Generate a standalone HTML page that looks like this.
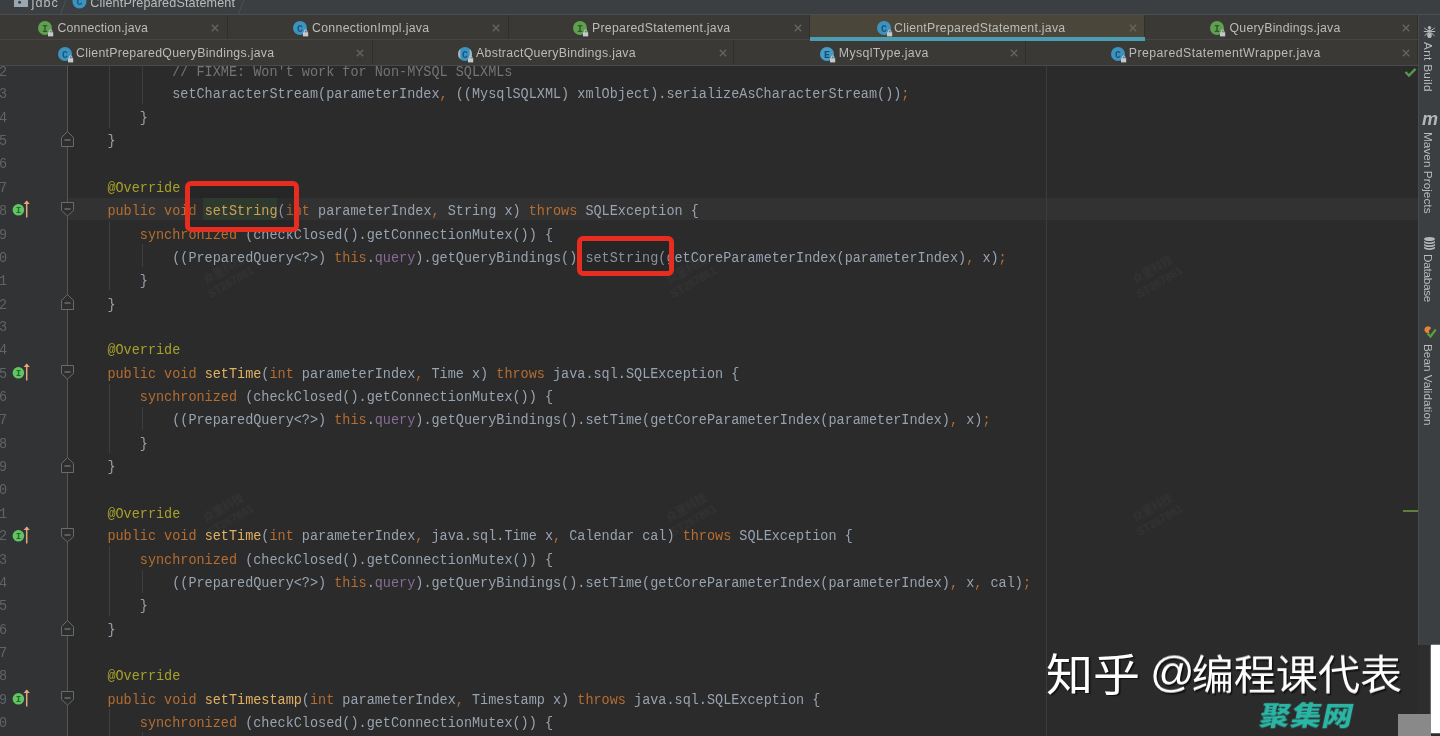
<!DOCTYPE html>
<html lang="zh">
<head>
<meta charset="utf-8">
<title>ClientPreparedStatement.java</title>
<style>
html,body{margin:0;padding:0;}
body{width:1440px;height:736px;overflow:hidden;background:#2b2b2b;position:relative;font-family:"Liberation Sans","Noto Sans CJK SC",sans-serif;}
.abs{position:absolute;}
/* top breadcrumb */
#crumb{left:0;top:0;width:1440px;height:14px;background:#3c3f41;overflow:hidden;z-index:5;}
#crumb span{position:absolute;top:-6px;font-size:12.6px;color:#bbbbbb;white-space:nowrap;line-height:18px;}
#crumbline{left:0;top:14px;width:1440px;height:1px;background:#4b4d4f;z-index:5;}
/* tabs */
.tabrow{left:0;width:1418px;height:24px;background:#3a3935;z-index:4;}
.tab{position:absolute;top:0;height:24px;box-sizing:border-box;border-right:1px solid #2f2f2d;}
.tab .t{position:absolute;top:1px;line-height:24px;font-size:12.3px;color:#bbbbbb;white-space:nowrap;}
.tab .x{position:absolute;top:9px;width:8px;height:8px;}
.tab svg.ic{position:absolute;top:5px;}
.tab.act{background:#4a4639;}
.rowline{left:0;width:1418px;height:1px;background:#2b2b2b;z-index:5;}
/* editor */
#gutter{left:0;top:65px;width:67px;height:671px;background:#313335;}
#gutline{left:67px;top:65px;width:1px;height:671px;background:#555555;}
#caret{left:68px;top:197.5px;width:1350px;height:22px;background:#323232;}
#margin{left:1046px;top:65px;width:1px;height:671px;background:#3d3d3d;}
#code{left:74.6px;top:61px;font-family:"Liberation Mono",monospace;font-size:13.5px;line-height:22.365px;color:#a9b7c6;transform-origin:0 0;transform:scaleY(1.04);opacity:.86;}
#code div{height:22.365px;white-space:pre;}
.k{color:#cc7832;} .m{color:#ffc66d;} .a{color:#bbb529;} .c{color:#808080;} .f{color:#9876aa;}
.hl{background:#344134;}
#nums{left:-1.4px;top:61px;font-family:"Liberation Mono",monospace;font-size:13.5px;line-height:22.365px;color:#606366;transform-origin:0 0;transform:scaleY(1.04);}
#nums div{height:22.365px;white-space:pre;}
.redbox{border:5.5px solid #e62d20;border-radius:6px;box-sizing:border-box;z-index:3;background:rgba(0,0,0,.1);}
/* right strip */
#strip{left:1418px;top:15px;width:22px;height:630px;background:#3c3f41;z-index:6;}
#stripline{left:1418px;top:15px;width:1px;height:630px;background:#484a4c;z-index:7;}
.vt{position:absolute;left:1421.3px;width:14px;writing-mode:vertical-rl;font-size:11.8px;color:#bbbbbb;white-space:nowrap;line-height:14px;z-index:8;}
.mv{font-family:"Liberation Sans",sans-serif;font-style:italic;font-weight:bold;font-size:18px;line-height:18px;color:#b3b7ba;letter-spacing:-0.5px;}
.wm1{left:1046px;top:644px;font-family:"Liberation Sans","Noto Sans CJK SC",sans-serif;font-size:42px;line-height:60px;color:#fff;white-space:nowrap;text-shadow:1.5px 1.5px 1px rgba(0,0,0,.6);z-index:9;transform-origin:0 50%;}
.wm2{left:1260px;top:697px;font-family:"Liberation Sans","Noto Sans CJK SC",sans-serif;font-weight:900;font-size:27px;line-height:38px;color:#2bb5a5;white-space:nowrap;transform:skewX(-12deg) scaleX(1.13);transform-origin:0 50%;letter-spacing:0.8px;z-index:9;}
.fw{position:absolute;width:80px;margin-left:-40px;text-align:center;font-family:"Liberation Sans","Noto Sans CJK SC",sans-serif;font-size:11px;line-height:14px;font-weight:bold;color:rgba(255,255,255,.035);transform:rotate(-30deg);white-space:nowrap;z-index:2;}
#code,#nums,.tabrow,#crumb,.vt,.mv,.wm1,.wm2,.fw{will-change:transform;}
</style>
</head>
<body>
<div id="gutter" class="abs"></div>
<div id="gutline" class="abs"></div>
<div id="caret" class="abs"></div>
<div id="margin" class="abs"></div>
<!--ED-->
<div class="abs" style="left:109px;top:65.0px;width:1px;height:62.7px;background:#3e3e3e"></div>
<div class="abs" style="left:142px;top:65.0px;width:1px;height:39.4px;background:#3e3e3e"></div>
<div class="abs" style="left:109px;top:220.7px;width:1px;height:69.8px;background:#3e3e3e"></div>
<div class="abs" style="left:142px;top:244.0px;width:1px;height:23.3px;background:#3e3e3e"></div>
<div class="abs" style="left:109px;top:383.5px;width:1px;height:69.8px;background:#3e3e3e"></div>
<div class="abs" style="left:142px;top:406.8px;width:1px;height:23.3px;background:#3e3e3e"></div>
<div class="abs" style="left:109px;top:546.4px;width:1px;height:69.8px;background:#3e3e3e"></div>
<div class="abs" style="left:142px;top:569.6px;width:1px;height:23.3px;background:#3e3e3e"></div>
<div class="abs" style="left:109px;top:709.2px;width:1px;height:26.8px;background:#3e3e3e"></div>
<div class="abs" style="left:142px;top:732.4px;width:1px;height:3.6px;background:#3e3e3e"></div>
<div class="abs" style="left:203.3px;top:197.5px;width:74px;height:22.5px;background:#344134"></div>
<svg class="abs" style="left:60px;top:201.3px" width="15" height="16" viewBox="0 0 15 16"><path d="M1.500 1.500h12v8l-6 5.500l-6-5.500z" fill="#2d2e2f" stroke="#6a6a6a" stroke-width="1"/><path d="M4.500 8h6" stroke="#8a8a8a" stroke-width="1"/></svg>
<svg class="abs" style="left:60px;top:364.1px" width="15" height="16" viewBox="0 0 15 16"><path d="M1.500 1.500h12v8l-6 5.500l-6-5.500z" fill="#2d2e2f" stroke="#6a6a6a" stroke-width="1"/><path d="M4.500 8h6" stroke="#8a8a8a" stroke-width="1"/></svg>
<svg class="abs" style="left:60px;top:526.9px" width="15" height="16" viewBox="0 0 15 16"><path d="M1.500 1.500h12v8l-6 5.500l-6-5.500z" fill="#2d2e2f" stroke="#6a6a6a" stroke-width="1"/><path d="M4.500 8h6" stroke="#8a8a8a" stroke-width="1"/></svg>
<svg class="abs" style="left:60px;top:689.8px" width="15" height="16" viewBox="0 0 15 16"><path d="M1.500 1.500h12v8l-6 5.500l-6-5.500z" fill="#2d2e2f" stroke="#6a6a6a" stroke-width="1"/><path d="M4.500 8h6" stroke="#8a8a8a" stroke-width="1"/></svg>
<svg class="abs" style="left:60px;top:131.3px" width="15" height="16" viewBox="0 0 15 16"><path d="M1.500 15.500h12v-9l-6-6l-6 6z" fill="#2d2e2f" stroke="#6a6a6a" stroke-width="1"/><path d="M4.500 9h6" stroke="#8a8a8a" stroke-width="1"/></svg>
<svg class="abs" style="left:60px;top:294.1px" width="15" height="16" viewBox="0 0 15 16"><path d="M1.500 15.500h12v-9l-6-6l-6 6z" fill="#2d2e2f" stroke="#6a6a6a" stroke-width="1"/><path d="M4.500 9h6" stroke="#8a8a8a" stroke-width="1"/></svg>
<svg class="abs" style="left:60px;top:456.9px" width="15" height="16" viewBox="0 0 15 16"><path d="M1.500 15.500h12v-9l-6-6l-6 6z" fill="#2d2e2f" stroke="#6a6a6a" stroke-width="1"/><path d="M4.500 9h6" stroke="#8a8a8a" stroke-width="1"/></svg>
<svg class="abs" style="left:60px;top:619.8px" width="15" height="16" viewBox="0 0 15 16"><path d="M1.500 15.500h12v-9l-6-6l-6 6z" fill="#2d2e2f" stroke="#6a6a6a" stroke-width="1"/><path d="M4.500 9h6" stroke="#8a8a8a" stroke-width="1"/></svg>
<svg class="abs" style="left:11px;top:199.1px" width="22" height="20" viewBox="0 0 22 20"><circle cx="7.400" cy="10.800" r="5.800" fill="#62c462"/><text x="7.400" y="14" text-anchor="middle" font-family="Liberation Mono,monospace" font-weight="bold" font-size="9" fill="#1f6a2a">I</text><path d="M15.700 2v16.500" stroke="#e9a57e" stroke-width="1.500" fill="none"/><path d="M12.600 5l3.100-3.600l3.100 3.600z" fill="#e9a57e"/></svg>
<svg class="abs" style="left:11px;top:361.9px" width="22" height="20" viewBox="0 0 22 20"><circle cx="7.400" cy="10.800" r="5.800" fill="#62c462"/><text x="7.400" y="14" text-anchor="middle" font-family="Liberation Mono,monospace" font-weight="bold" font-size="9" fill="#1f6a2a">I</text><path d="M15.700 2v16.500" stroke="#e9a57e" stroke-width="1.500" fill="none"/><path d="M12.600 5l3.100-3.600l3.100 3.600z" fill="#e9a57e"/></svg>
<svg class="abs" style="left:11px;top:524.7px" width="22" height="20" viewBox="0 0 22 20"><circle cx="7.400" cy="10.800" r="5.800" fill="#62c462"/><text x="7.400" y="14" text-anchor="middle" font-family="Liberation Mono,monospace" font-weight="bold" font-size="9" fill="#1f6a2a">I</text><path d="M15.700 2v16.500" stroke="#e9a57e" stroke-width="1.500" fill="none"/><path d="M12.600 5l3.100-3.600l3.100 3.600z" fill="#e9a57e"/></svg>
<svg class="abs" style="left:11px;top:687.6px" width="22" height="20" viewBox="0 0 22 20"><circle cx="7.400" cy="10.800" r="5.800" fill="#62c462"/><text x="7.400" y="14" text-anchor="middle" font-family="Liberation Mono,monospace" font-weight="bold" font-size="9" fill="#1f6a2a">I</text><path d="M15.700 2v16.500" stroke="#e9a57e" stroke-width="1.500" fill="none"/><path d="M12.600 5l3.100-3.600l3.100 3.600z" fill="#e9a57e"/></svg>
<div class="abs redbox" style="left:185px;top:180.5px;width:114px;height:51px"></div>
<div class="abs redbox" style="left:577.2px;top:236.1px;width:97.2px;height:40px"></div>
<!--/ED-->
<!--CODE-->
<div id="code" class="abs">
<div>            <span class="c">// FIXME: Won't work for Non-MYSQL SQLXMLs</span></div>
<div>            setCharacterStream(parameterIndex<span class="k">,</span> ((MysqlSQLXML) xmlObject).serializeAsCharacterStream())<span class="k">;</span></div>
<div>        }</div>
<div>    }</div>
<div></div>
<div>    <span class="a">@Override</span></div>
<div>    <span class="k">public void </span><span class="m">setString</span>(<span class="k">int </span>parameterIndex<span class="k">, </span>String x) <span class="k">throws </span>SQLException {</div>
<div>        <span class="k">synchronized </span>(checkClosed().getConnectionMutex()) {</div>
<div>            ((PreparedQuery&lt;?&gt;) <span class="k">this</span>.<span class="f">query</span>).getQueryBindings().setString(getCoreParameterIndex(parameterIndex)<span class="k">, </span>x)<span class="k">;</span></div>
<div>        }</div>
<div>    }</div>
<div></div>
<div>    <span class="a">@Override</span></div>
<div>    <span class="k">public void </span><span class="m">setTime</span>(<span class="k">int </span>parameterIndex<span class="k">, </span>Time x) <span class="k">throws </span>java.sql.SQLException {</div>
<div>        <span class="k">synchronized </span>(checkClosed().getConnectionMutex()) {</div>
<div>            ((PreparedQuery&lt;?&gt;) <span class="k">this</span>.<span class="f">query</span>).getQueryBindings().setTime(getCoreParameterIndex(parameterIndex)<span class="k">, </span>x)<span class="k">;</span></div>
<div>        }</div>
<div>    }</div>
<div></div>
<div>    <span class="a">@Override</span></div>
<div>    <span class="k">public void </span><span class="m">setTime</span>(<span class="k">int </span>parameterIndex<span class="k">, </span>java.sql.Time x<span class="k">, </span>Calendar cal) <span class="k">throws </span>SQLException {</div>
<div>        <span class="k">synchronized </span>(checkClosed().getConnectionMutex()) {</div>
<div>            ((PreparedQuery&lt;?&gt;) <span class="k">this</span>.<span class="f">query</span>).getQueryBindings().setTime(getCoreParameterIndex(parameterIndex)<span class="k">, </span>x<span class="k">, </span>cal)<span class="k">;</span></div>
<div>        }</div>
<div>    }</div>
<div></div>
<div>    <span class="a">@Override</span></div>
<div>    <span class="k">public void </span><span class="m">setTimestamp</span>(<span class="k">int </span>parameterIndex<span class="k">, </span>Timestamp x) <span class="k">throws </span>java.sql.SQLException {</div>
<div>        <span class="k">synchronized </span>(checkClosed().getConnectionMutex()) {</div>
</div>
<div id="nums" class="abs"><div>2</div><div>3</div><div>4</div><div>5</div><div>6</div><div>7</div><div>8</div><div>9</div><div>0</div><div>1</div><div>2</div><div>3</div><div>4</div><div>5</div><div>6</div><div>7</div><div>8</div><div>9</div><div>0</div><div>1</div><div>2</div><div>3</div><div>4</div><div>5</div><div>6</div><div>7</div><div>8</div><div>9</div><div>0</div></div>
<!--/CODE-->
<!--TOP-->
<div id="crumb" class="abs"><svg class="abs" style="left:14px;top:-5px" width="14" height="12" viewBox="0 0 14 12"><path d="M0 0h5.5l1.5 2h7v10h-14z" fill="#9aa7b0"/><circle cx="5.6" cy="7.3" r="1.5" fill="#3c3f41"/></svg><span style="left:31.5px;letter-spacing:1.1px">jdbc</span><svg class="abs" style="left:59px;top:-11px" width="8" height="26" viewBox="0 0 8 26"><path d="M1 0L7 11L1 26" stroke="#4d5052" stroke-width="1" fill="none"/></svg><svg class="abs" style="left:72px;top:-6px" width="16" height="16" viewBox="0 0 16 16"><circle cx="7.5" cy="7.5" r="7" fill="#3d93bf"/><text x="7.5" y="11" text-anchor="middle" font-family="Liberation Mono,monospace" font-weight="bold" font-size="10" fill="#1c5578">C</text></svg><span style="left:90.3px;letter-spacing:0.15px">ClientPreparedStatement</span><svg class="abs" style="left:237px;top:-11px" width="8" height="26" viewBox="0 0 8 26"><path d="M1 0L7 11L1 26" stroke="#4d5052" stroke-width="1" fill="none"/></svg></div>
<div id="crumbline" class="abs"></div>
<div class="tabrow abs" style="top:15px">
<div class="tab" style="left:0px;width:228px"><svg class="ic" style="left:37.0px;top:5.0px" width="18" height="18" viewBox="0 0 18 18"><circle cx="8" cy="8" r="7" fill="#5e9f50"/><text x="8" y="11.6" text-anchor="middle" font-family="Liberation Mono,monospace" font-weight="bold" font-size="10" fill="#2c5a28">I</text><path d="M12.3 12.4v-1.3a1.3 1.3 0 0 1 2.6 0v1.3" fill="none" stroke="#c3c9cd" stroke-width="1"/><rect x="11" y="12.2" width="5.2" height="4.2" fill="#c3c9cd"/></svg><span class="t" style="left:57.5px;letter-spacing:0.152px">Connection.java</span><svg class="x" style="left:210.5px" width="8" height="8" viewBox="0 0 8 8"><path d="M0.8 0.8L7.2 7.2M7.2 0.8L0.8 7.2" stroke="#666663" stroke-width="1.25" fill="none"/></svg></div>
<div class="tab" style="left:228px;width:281px"><svg class="ic" style="left:64.0px;top:5.0px" width="18" height="18" viewBox="0 0 18 18"><circle cx="8" cy="8" r="7" fill="#3d93bf"/><text x="8" y="11.6" text-anchor="middle" font-family="Liberation Mono,monospace" font-weight="bold" font-size="10" fill="#1c5578">C</text><path d="M12.3 12.4v-1.3a1.3 1.3 0 0 1 2.6 0v1.3" fill="none" stroke="#c3c9cd" stroke-width="1"/><rect x="11" y="12.2" width="5.2" height="4.2" fill="#c3c9cd"/></svg><span class="t" style="left:84.0px;letter-spacing:0.318px">ConnectionImpl.java</span><svg class="x" style="left:264.0px" width="8" height="8" viewBox="0 0 8 8"><path d="M0.8 0.8L7.2 7.2M7.2 0.8L0.8 7.2" stroke="#666663" stroke-width="1.25" fill="none"/></svg></div>
<div class="tab" style="left:509px;width:301px"><svg class="ic" style="left:63.0px;top:5.0px" width="18" height="18" viewBox="0 0 18 18"><circle cx="8" cy="8" r="7" fill="#5e9f50"/><text x="8" y="11.6" text-anchor="middle" font-family="Liberation Mono,monospace" font-weight="bold" font-size="10" fill="#2c5a28">I</text><path d="M12.3 12.4v-1.3a1.3 1.3 0 0 1 2.6 0v1.3" fill="none" stroke="#c3c9cd" stroke-width="1"/><rect x="11" y="12.2" width="5.2" height="4.2" fill="#c3c9cd"/></svg><span class="t" style="left:83.0px;letter-spacing:0.266px">PreparedStatement.java</span><svg class="x" style="left:285.0px" width="8" height="8" viewBox="0 0 8 8"><path d="M0.8 0.8L7.2 7.2M7.2 0.8L0.8 7.2" stroke="#666663" stroke-width="1.25" fill="none"/></svg></div>
<div class="tab act" style="left:810px;width:335px"><svg class="ic" style="left:66.0px;top:5.0px" width="18" height="18" viewBox="0 0 18 18"><circle cx="8" cy="8" r="7" fill="#3d93bf"/><text x="8" y="11.6" text-anchor="middle" font-family="Liberation Mono,monospace" font-weight="bold" font-size="10" fill="#1c5578">C</text><path d="M12.3 12.4v-1.3a1.3 1.3 0 0 1 2.6 0v1.3" fill="none" stroke="#c3c9cd" stroke-width="1"/><rect x="11" y="12.2" width="5.2" height="4.2" fill="#c3c9cd"/></svg><span class="t" style="left:84.0px;letter-spacing:0.264px">ClientPreparedStatement.java</span><svg class="x" style="left:319.0px" width="8" height="8" viewBox="0 0 8 8"><path d="M0.8 0.8L7.2 7.2M7.2 0.8L0.8 7.2" stroke="#666663" stroke-width="1.25" fill="none"/></svg></div>
<div class="tab" style="left:1145px;width:273px"><svg class="ic" style="left:64.0px;top:5.0px" width="18" height="18" viewBox="0 0 18 18"><circle cx="8" cy="8" r="7" fill="#5e9f50"/><text x="8" y="11.6" text-anchor="middle" font-family="Liberation Mono,monospace" font-weight="bold" font-size="10" fill="#2c5a28">I</text><path d="M12.3 12.4v-1.3a1.3 1.3 0 0 1 2.6 0v1.3" fill="none" stroke="#c3c9cd" stroke-width="1"/><rect x="11" y="12.2" width="5.2" height="4.2" fill="#c3c9cd"/></svg><span class="t" style="left:84.5px;letter-spacing:0.241px">QueryBindings.java</span><svg class="x" style="left:257.0px" width="8" height="8" viewBox="0 0 8 8"><path d="M0.8 0.8L7.2 7.2M7.2 0.8L0.8 7.2" stroke="#666663" stroke-width="1.25" fill="none"/></svg></div>
</div>
<div class="rowline abs" style="top:39px;background:#474541"></div>
<div class="abs" style="left:810px;top:36.5px;width:335px;height:4px;background:#4a9db3;z-index:6"></div>
<div class="tabrow abs" style="top:40px;height:24.6px">
<div class="tab" style="left:0px;width:373px"><svg class="ic" style="left:56.6px;top:5.5px" width="18" height="18" viewBox="0 0 18 18"><circle cx="8" cy="8" r="7" fill="#3d93bf"/><text x="8" y="11.6" text-anchor="middle" font-family="Liberation Mono,monospace" font-weight="bold" font-size="10" fill="#1c5578">C</text><path d="M12.3 12.4v-1.3a1.3 1.3 0 0 1 2.6 0v1.3" fill="none" stroke="#c3c9cd" stroke-width="1"/><rect x="11" y="12.2" width="5.2" height="4.2" fill="#c3c9cd"/></svg><span class="t" style="left:76.0px;letter-spacing:0.306px">ClientPreparedQueryBindings.java</span><svg class="x" style="left:356.0px" width="8" height="8" viewBox="0 0 8 8"><path d="M0.8 0.8L7.2 7.2M7.2 0.8L0.8 7.2" stroke="#666663" stroke-width="1.25" fill="none"/></svg></div>
<div class="tab" style="left:373px;width:361px"><svg class="ic" style="left:84.3px;top:5.5px" width="18" height="18" viewBox="0 0 18 18"><circle cx="8" cy="8" r="7" fill="#3d93bf"/><path d="M3.4 2.724A7 7 0 0 0 3.4 13.276z" fill="#a9b4bb"/><path d="M12.6 2.724A7 7 0 0 1 12.6 13.276z" fill="#a9b4bb"/><text x="8" y="11.6" text-anchor="middle" font-family="Liberation Mono,monospace" font-weight="bold" font-size="10" fill="#1c5578">C</text><path d="M12.3 12.4v-1.3a1.3 1.3 0 0 1 2.6 0v1.3" fill="none" stroke="#c3c9cd" stroke-width="1"/><rect x="11" y="12.2" width="5.2" height="4.2" fill="#c3c9cd"/></svg><span class="t" style="left:103.0px;letter-spacing:0.316px">AbstractQueryBindings.java</span><svg class="x" style="left:345.5px" width="8" height="8" viewBox="0 0 8 8"><path d="M0.8 0.8L7.2 7.2M7.2 0.8L0.8 7.2" stroke="#666663" stroke-width="1.25" fill="none"/></svg></div>
<div class="tab" style="left:734px;width:292px"><svg class="ic" style="left:85.0px;top:5.5px" width="18" height="18" viewBox="0 0 18 18"><circle cx="8" cy="8" r="7" fill="#479cc6"/><text x="8" y="11.6" text-anchor="middle" font-family="Liberation Mono,monospace" font-weight="bold" font-size="10" fill="#174f73">E</text><path d="M12.3 12.4v-1.3a1.3 1.3 0 0 1 2.6 0v1.3" fill="none" stroke="#c3c9cd" stroke-width="1"/><rect x="11" y="12.2" width="5.2" height="4.2" fill="#c3c9cd"/></svg><span class="t" style="left:104.8px;letter-spacing:0.374px">MysqlType.java</span><svg class="x" style="left:275.8px" width="8" height="8" viewBox="0 0 8 8"><path d="M0.8 0.8L7.2 7.2M7.2 0.8L0.8 7.2" stroke="#666663" stroke-width="1.25" fill="none"/></svg></div>
<div class="tab" style="left:1026px;width:392px"><svg class="ic" style="left:84.0px;top:5.5px" width="18" height="18" viewBox="0 0 18 18"><circle cx="8" cy="8" r="7" fill="#3d93bf"/><text x="8" y="11.6" text-anchor="middle" font-family="Liberation Mono,monospace" font-weight="bold" font-size="10" fill="#1c5578">C</text><path d="M12.3 12.4v-1.3a1.3 1.3 0 0 1 2.6 0v1.3" fill="none" stroke="#c3c9cd" stroke-width="1"/><rect x="11" y="12.2" width="5.2" height="4.2" fill="#c3c9cd"/></svg><span class="t" style="left:102.8px;letter-spacing:0.451px">PreparedStatementWrapper.java</span><svg class="x" style="left:376.0px" width="8" height="8" viewBox="0 0 8 8"><path d="M0.8 0.8L7.2 7.2M7.2 0.8L0.8 7.2" stroke="#666663" stroke-width="1.25" fill="none"/></svg></div>
</div>
<div class="rowline abs" style="top:64.6px;background:#47494b"></div>
<!--/TOP-->
<!--RIGHT-->
<div id="strip" class="abs"></div>
<div id="stripline" class="abs"></div>
<svg class="abs" style="left:1423px;top:25px;z-index:8" width="13" height="14" viewBox="0 0 13 14"><g fill="#b3b7ba" stroke="#b3b7ba" stroke-width="1" stroke-linecap="round"><ellipse cx="6.5" cy="2.6" rx="1.7" ry="1.6" stroke="none"/><ellipse cx="6.5" cy="6" rx="1.5" ry="1.7" stroke="none"/><ellipse cx="6.5" cy="10.2" rx="2.3" ry="2.8" stroke="none"/><path d="M5 5.5L1.5 3.2M8 5.5L11.500 3.2M5 6.5H1.200M8 6.500H11.800M5.200 7.500L1.800 10.500M7.800 7.500L11.200 10.500" fill="none"/></g></svg>
<div class="vt" style="top:41.7px;letter-spacing:0.29px">Ant Build</div>
<div class="abs mv" style="left:1422px;top:109.5px;z-index:8">m</div>
<div class="vt" style="top:131.8px;letter-spacing:0.02px">Maven Projects</div>
<svg class="abs" style="left:1424px;top:237px;z-index:8" width="11" height="13" viewBox="0 0 11 13"><g fill="#b3b7ba"><ellipse cx="5.5" cy="2" rx="5.5" ry="2"/><path d="M0 3.400a5.500 2 0 0 0 11 0v1.700a5.500 2 0 0 1-11 0z"/><path d="M0 6.300a5.500 2 0 0 0 11 0v1.700a5.500 2 0 0 1-11 0z"/><path d="M0 9.200a5.500 2 0 0 0 11 0v1.700a5.500 2 0 0 1-11 0z"/></g></svg>
<div class="vt" style="top:254.3px;letter-spacing:-0.31px">Database</div>
<svg class="abs" style="left:1423px;top:325px;z-index:8" width="14" height="14" viewBox="0 0 14 14"><path d="M2 6.500C0.500 4 2.500 1 5.500 1.200C8 1.400 8.500 3.500 7 4.500C5.800 5.300 5.500 6.800 6.500 8C4.500 8.500 3 8 2 6.500z" fill="#e6813a"/><path d="M4.500 8.500L7.500 11.500L12.800 4.500" fill="none" stroke="#57a03e" stroke-width="2.200"/></svg>
<div class="vt" style="top:343.5px;letter-spacing:-0.02px">Bean Validation</div>
<svg class="abs" style="left:1404px;top:67px;z-index:3" width="13" height="11" viewBox="0 0 13 11"><path d="M1.500 5L5 8.500L11.500 1.800" fill="none" stroke="#4f9d4b" stroke-width="2.400"/></svg>
<div class="abs" style="left:1403px;top:509.500px;width:15px;height:2px;background:#5f7f3a;z-index:3"></div>
<div class="abs" style="left:1418px;top:645px;width:13px;height:91px;background:#2d2d2d;z-index:6"></div>
<div class="abs" style="left:1430.500px;top:644.500px;width:10px;height:88px;background:#ffffff;z-index:7;box-shadow:0 0 1.500px #fff"></div>
<div class="abs" style="left:1398px;top:714px;width:32.500px;height:22px;background:#898989;z-index:7"></div>

<!--/RIGHT-->
<!--WM-->
<div class="abs wm1" style="left:1046px;top:646.2px;transform:scale(1.12,1.05)">知乎</div>
<div class="abs wm1" style="left:1150px;top:644.5px;font-size:42.1px;transform:scale(1,0.98)"><span style="font-size:44px;letter-spacing:-3px;position:relative;top:-3px">@</span>编程课代表</div>
<div class="abs wm2">聚集网</div>

<div class="fw" style="left:227px;top:262px">众里科技<br>ST267861</div>
<div class="fw" style="left:227px;top:500px">众里科技<br>ST267861</div>
<div class="fw" style="left:690px;top:262px">众里科技<br>ST267861</div>
<div class="fw" style="left:690px;top:500px">众里科技<br>ST267861</div>
<div class="fw" style="left:1156px;top:262px">众里科技<br>ST267861</div>
<div class="fw" style="left:1156px;top:500px">众里科技<br>ST267861</div>
<!--/WM-->
</body>
</html>
